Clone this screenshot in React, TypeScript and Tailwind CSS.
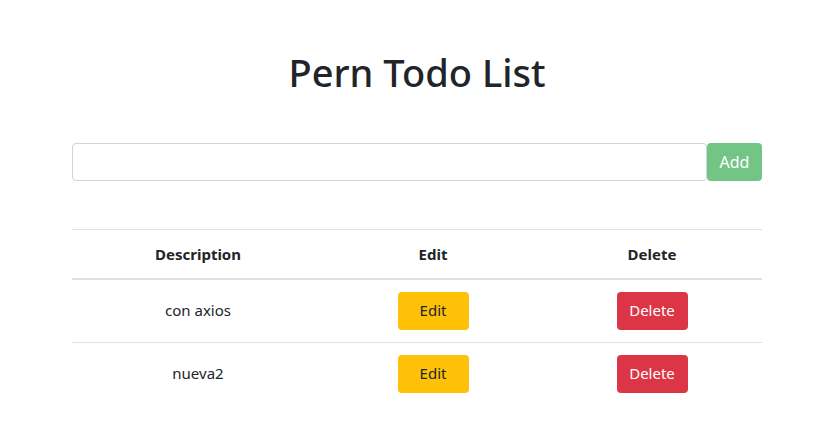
const todos = [
  { id: 1, description: 'con axios' },
  { id: 2, description: 'nueva2' },
];

export default function App() {
  return (
    <div className="min-h-[434px] bg-white text-[#212529] font-['Noto_Sans',sans-serif]">
      <div className="w-[690px] mx-auto translate-x-[2px]">
        <h1 className="pt-[49px] text-center text-[38px] leading-[47px] font-medium">
          Pern Todo List
        </h1>

        <form className="flex mt-[47px]" onSubmit={(e) => e.preventDefault()}>
          <input
            type="text"
            className="flex-1 h-[38px] border border-[#ced4da] rounded-[4px] px-3 text-base outline-none"
          />
          <button
            disabled
            className="h-[38px] w-[55px] rounded-[4px] bg-[#28a745] opacity-65 text-white text-base"
          >
            Add
          </button>
        </form>

        <table className="w-full mt-[48px] border-collapse text-center text-[15px]">
          <thead>
            <tr className="border-t border-[#dee2e6]">
              <th className="w-[252px] h-[49px] border-b-2 border-[#dee2e6] font-bold">Description</th>
              <th className="w-[218px] border-b-2 border-[#dee2e6] font-bold">Edit</th>
              <th className="border-b-2 border-[#dee2e6] font-bold">Delete</th>
            </tr>
          </thead>
          <tbody>
            {todos.map((todo) => (
              <tr key={todo.id} className="border-t border-[#dee2e6] first:border-t-0">
                <td className="py-3">{todo.description}</td>
                <td className="py-3">
                  <button className="w-[71px] h-[38px] rounded-[4px] bg-[#ffc107] text-[#212529]">Edit</button>
                </td>
                <td className="py-3">
                  <button className="w-[71px] h-[38px] rounded-[4px] bg-[#dc3545] text-white">Delete</button>
                </td>
              </tr>
            ))}
          </tbody>
        </table>
      </div>
    </div>
  );
}
